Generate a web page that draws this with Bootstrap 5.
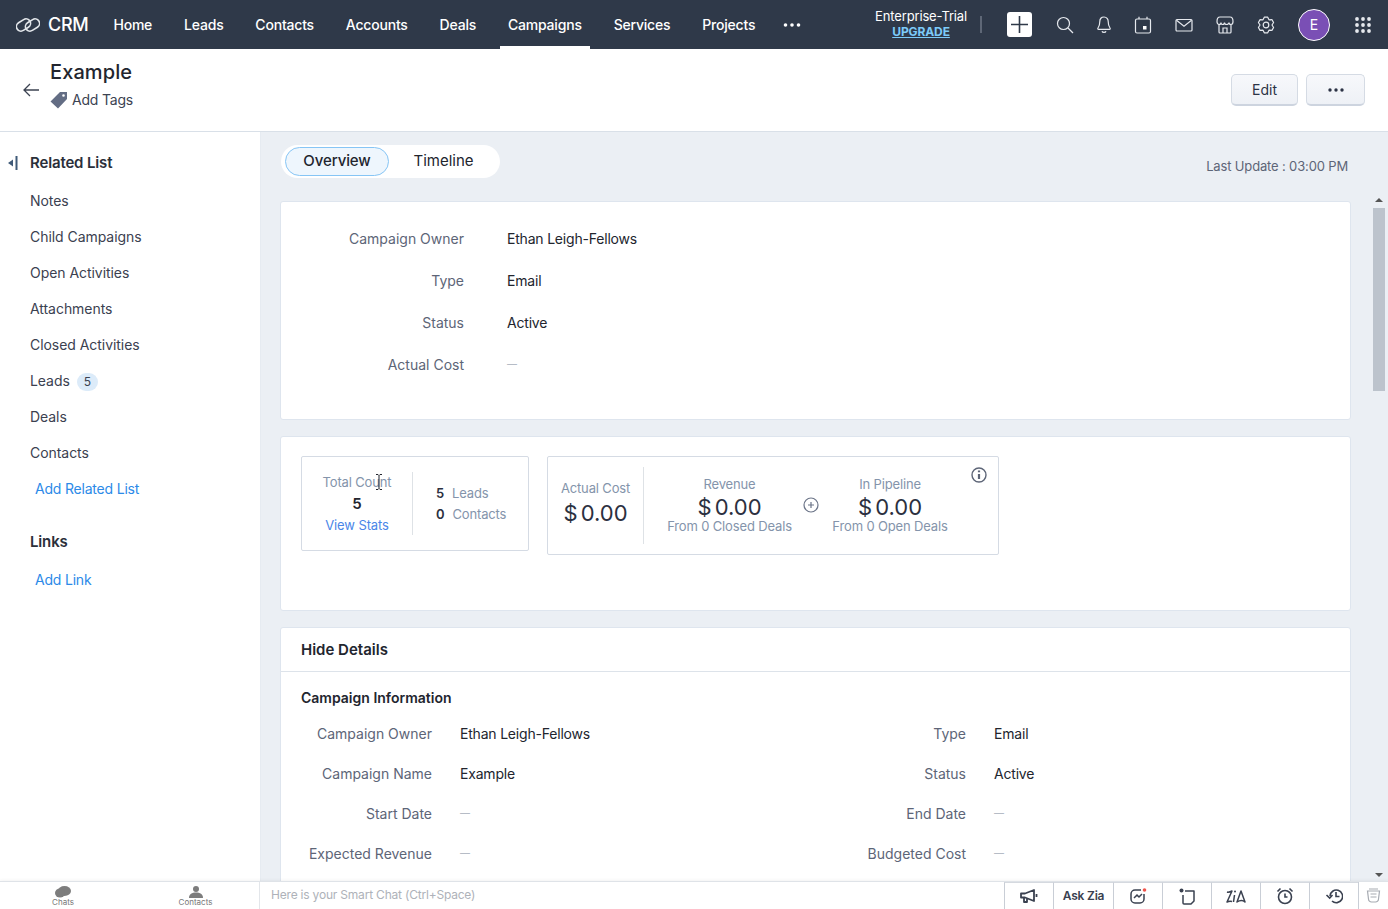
<!DOCTYPE html>
<html>
<head>
  <title>Campaign - Example</title>
  <link rel="stylesheet" href="https://cdn.jsdelivr.net/npm/bootstrap@5.3.0/dist/css/bootstrap.min.css">
  <style>
    html, body { height: 100%; }
    body { font-family: "Inter", "Liberation Sans", sans-serif; font-size: 14px; color: #22252e; overflow: hidden; background: #ebeff4; }
    .page-wrap { height: 909px; }

    /* top bar */
    .crm-top { height: 49px; background: #2f3949; color: #fff; padding: 0 17px 0 16px; flex: none; }
    .crm-brand { font-size: 18px; font-weight: 500; color: #fff; margin-right: 17px; gap: 8px; letter-spacing: -.3px; }
    .crm-link { color: #fff; text-decoration: none; height: 49px; padding: 0 8px; margin-right: 15.900px; line-height: 50px; font-weight: 500; font-size: 14px; letter-spacing: -.2px; border-bottom: 3px solid transparent; }
    .crm-link.active { border-bottom-color: #fff; }
    .trial-box { text-align: center; font-size: 13px; line-height: 15px; margin-right: 13px; margin-top: -1px; letter-spacing: -.15px; }
    .trial-box a { display: block; color: #7ccbf9; font-size: 12px; font-weight: 700; letter-spacing: -.1px; }
    .top-sep { width: 2px; height: 17px; background: #5e6776; margin-right: 25px; }
    .plus-btn { width: 25px; height: 25px; background: #fff; border-radius: 3px; margin-right: 24px; }
    .top-ico { width: 18px; height: 18px; margin-right: 23px; flex: none; }
    .top-ico.tight { margin-right: 21px; }
    .avatar-e { width: 32px; height: 32px; border-radius: 50%; background: #7a4fb5; border: 1px solid #fff; font-size: 14px; margin-right: 25px; }

    /* record header */
    .rec-head { height: 83px; background: #fff; border-bottom: 1px solid #d9e0e8; flex: none; padding-left: 23px; padding-right: 23px; }
    .rec-block { align-self: flex-start; padding-top: 11px; margin-left: 2px; }
    .rec-title { font-size: 20px; font-weight: 500; line-height: 24px; letter-spacing: .1px; }
    .rec-tags { font-size: 14px; color: #3c4352; line-height: 20px; margin-top: 6px; gap: 4px; letter-spacing: -.2px; }
    .head-btn { height: 32px; background: linear-gradient(#f7f8fb, #eef1f6); border: 1px solid #d5dbe4; border-bottom: 2px solid #cdd4df; border-radius: 5px; color: #2c3345; font-size: 14px; padding: 0; }
    .btn-edit { width: 67px; }
    .btn-more { width: 59px; }

    /* body columns */
    .body-row { flex: 1 1 auto; min-height: 0; }
    .side-col { width: 261px; background: #fff; border-right: 1px solid #e6ebf1; flex: none; padding-top: 21px; }
    .side-head { font-weight: 600; font-size: 15px; line-height: 20px; padding-left: 30px; color: #2b2f3a; position: relative; letter-spacing: -.15px; }
    .side-toggle { position: absolute; left: 8px; top: 3px; }
    .side-item { line-height: 20px; padding-left: 30px; margin-top: 16px; color: #3b4150; letter-spacing: -.05px; }
    .side-item.first-item { margin-top: 18px; }
    .side-add { padding-left: 35px; margin-top: 16px; line-height: 20px; letter-spacing: -.2px; }
    .side-add.link-add { margin-top: 18px; }
    .side-head.links-head { margin-top: 33px; }
    .side-add a, .blue-link { color: #2c8ae8; text-decoration: none; }
    .count-pill { background: #dcebf9; border-radius: 9px; font-size: 12px; padding: 0 7px; margin-left: 3px; display: inline-block; line-height: 18px; }
    .main-col { flex: 1 1 auto; min-width: 0; padding: 13px 0 0 20px; position: relative; overflow: hidden; }
    .tab-wrap { background: #fff; border-radius: 17px; height: 33px; width: 219px; padding: 1px 2px; }
    .tab-on { width: 104px; height: 29px; border: 1px solid #86c5f5; border-radius: 15px; background: #eef6fd; font-weight: 500; font-size: 15px; letter-spacing: -.1px; line-height: 26px; text-align: center; margin-left: 2px; margin-top: 1px; flex: none; }
    .tab-off { flex: 1; text-align: center; font-size: 15px; line-height: 29px; margin-top: 0; }
    .last-upd { color: #5d6577; font-size: 13px; margin-right: 40px; margin-top: 12px; letter-spacing: -.15px; }

    .white-card { background: #fff; border: 1px solid #dee5ee; border-radius: 3px; width: 1071px; margin-bottom: 16px; margin-left: -1px; }
    .overview-card { height: 219px; margin-top: 23px; padding-top: 15px; }
    .ov-row { display: grid; grid-template-columns: 183px 1fr; column-gap: 43px; height: 42px; align-items: center; }
    .f-label { color: #5d6577; text-align: right; }
    .f-val, .ov-val { letter-spacing: -.2px; }
    .f-dash { color: #a6adb9; font-size: 10px; }
    .stats-card { height: 175px; padding: 19px 20px; gap: 18px; display: flex; align-items: flex-start; }
    .stat-box { border: 1px solid #d5dbe4; border-radius: 2px; }
    .box-a { width: 228px; height: 95px; padding: 15px 0; position: relative; }
    .box-b { width: 452px; height: 99px; padding: 10px 0; position: relative; }
    .grey-lbl { color: #8494ab; font-size: 13px; line-height: 18px; letter-spacing: -.15px; }
    .num-b { font-weight: 600; font-size: 15px; line-height: 24px; margin-top: 1px; }
    .num-s { font-weight: 600; font-size: 13px; color: #2b3040; margin-right: 8px; }
    .count-col { width: 111px; padding-top: 1px; }
    .count-side { padding: 12px 0 0 23px; }
    .count-side .grey-lbl + .grey-lbl { margin-top: 3px; }
    .view-stats { font-size: 13px; line-height: 18px; color: #4a86e8; letter-spacing: -.1px; }
    .text-cursor { position: absolute; left: 73px; top: 17px; }
    .money { font-size: 22px; line-height: 20px; color: #2b3040; word-spacing: -3px; margin-top: 4px; }
    .cost-col { width: 96px; padding-top: 12px; }
    .cost-col .money { margin-top: 6px; }
    .rev-col { width: 171px; padding-top: 8px; }
    .pipe-col { width: 142px; padding-top: 8px; }
    .plus-ring { margin: 30px 0 0 -12px; flex: none; }
    .info-ring { position: absolute; right: 11px; top: 10px; }
    .detail-card { padding: 0 0 30px; }
    .detail-head { height: 44px; border-bottom: 1px solid #dde3ea; padding: 0 20px; font-weight: 600; font-size: 15px; line-height: 43px; }
    .detail-sub { font-weight: 600; font-size: 14px; padding: 16px 20px 5px; line-height: 20px; }
    .det-row { display: grid; grid-template-columns: 151px 349px 185px 1fr; height: 40px; align-items: center; }
    .det-row > .f-val { padding-left: 28px; }

    .fake-scroll { position: absolute; top: 62px; right: 3px; bottom: 0; width: 12px; background: #ebeff4; }
    .fake-scroll i { display: block; width: 12px; height: 183px; margin-top: 14px; background: #bcc3cc; }
    .scroll-up, .scroll-down { position: absolute; left: 2px; width: 0; height: 0; border-left: 4px solid transparent; border-right: 4px solid transparent; }
    .scroll-up { top: 4px; border-bottom: 4px solid #555; }
    .scroll-down { bottom: 4px; border-top: 4px solid #555; }

    /* bottom strip */
    .chat-bar { height: 28px; flex: none; background: #fff; border-top: 1px solid #dfe3e8; position: relative; box-shadow: 0 -1px 3px rgba(0,0,0,.05); }
    .chat-left { width: 260px; border-right: 1px solid #e3e6ea; color: #777; font-size: 8px; text-align: center; flex: none; }
    .chat-left > div { line-height: 8px; padding-top: 4px; flex: none; }
    .chat-cell-a { width: 126px; }
    .chat-cell-b { width: 133px; padding-left: 6px; }
    .chat-hint { color: #aeb2b9; font-size: 12px; letter-spacing: -.2px; padding-left: 11px; line-height: 26px; }
    .tool-cell { height: 27px; border-left: 1px solid #c9ced6; border-top: 1px solid #d5d9df; width: 49px; display: flex; align-items: center; justify-content: center; flex: none; font-size: 12px; font-weight: 600; color: #3a4150; letter-spacing: -.2px; }
    .tool-cell.wide { width: 60px; }
    .tool-cell.narrow { width: 30px; border-top: 0; }
  </style>
</head>
<body>
<div class="page-wrap d-flex flex-column">

  <nav class="crm-top d-flex align-items-center">
    <div class="crm-brand d-flex align-items-center">
      <svg width="24" height="18" viewBox="0 0 24 18" fill="none" stroke="#e3e6ea" stroke-width="1.600"><rect x="0" y="4.500" width="15" height="9" rx="4.500" transform="rotate(-32 7.500 9)"/><rect x="9" y="4.500" width="15" height="9" rx="4.500" transform="rotate(-32 16.500 9)"/></svg>
      <span>CRM</span>
    </div>
    <a class="crm-link" href="#">Home</a>
    <a class="crm-link" href="#">Leads</a>
    <a class="crm-link" href="#">Contacts</a>
    <a class="crm-link" href="#">Accounts</a>
    <a class="crm-link" href="#">Deals</a>
    <a class="crm-link active" href="#">Campaigns</a>
    <a class="crm-link" href="#">Services</a>
    <a class="crm-link" href="#">Projects</a>
    <svg width="18" height="4" viewBox="0 0 18 4" fill="#fff" class="ms-1"><circle cx="2.500" cy="2" r="1.800"/><circle cx="9" cy="2" r="1.800"/><circle cx="15.500" cy="2" r="1.800"/></svg>

    <div class="ms-auto d-flex align-items-center">
      <div class="trial-box">Enterprise-Trial<a href="#">UPGRADE</a></div>
      <div class="top-sep"></div>
      <div class="plus-btn d-flex align-items-center justify-content-center">
        <svg width="17" height="17" viewBox="0 0 17 17" stroke="#2f3949" stroke-width="1.600"><path d="M8.500 0v17M0 8.500h17"/></svg>
      </div>
      <svg class="top-ico tight" viewBox="0 0 18 18" fill="none" stroke="#e6e9ee" stroke-width="1.200"><circle cx="7.500" cy="7.500" r="6"/><path d="m12 12 5 5"/></svg>
      <svg class="top-ico tight" viewBox="0 0 18 18" fill="none" stroke="#e6e9ee" stroke-width="1.200"><path d="M9 1C6.300 1 4.800 3 4.800 5.500c0 3.500-.6 5-1.800 6.500-.5.700-.2 1.300.6 1.300h10.800c.8 0 1.100-.6.600-1.300C13.800 10.500 13.200 9 13.200 5.500 13.200 3 11.700 1 9 1Z"/><path d="M7 15.300c.5 1.500 3.500 1.500 4 0"/></svg>
      <svg class="top-ico" viewBox="0 0 18 18" fill="none" stroke="#e6e9ee" stroke-width="1.200"><rect x="1.500" y="3" width="15" height="14" rx="1.500"/><path d="M5 .8V3M13 .8V3"/><rect x="9" y="10" width="3.500" height="3.500" fill="#fff" stroke="none"/></svg>
      <svg class="top-ico" viewBox="0 0 18 18" fill="none" stroke="#e6e9ee" stroke-width="1.200"><rect x="1" y="3.500" width="16" height="11.500" rx="1"/><path d="m1.500 4.200 7.500 6 7.500-6"/></svg>
      <svg class="top-ico" viewBox="0 0 18 18" fill="none" stroke="#e6e9ee" stroke-width="1.200"><path d="M4 1h10c1.600 0 3 1.800 3 4.500 0 2-1 3-2 3-1.200 0-2-.8-2-2 0 1.200-1.500 2-2.500 2S8.500 7.700 8.500 6.500c0 1.200-1 2-2 2s-1.500-.8-1.500-2c0 1.200-1 2-2 2S1 7.500 1 5.500C1 2.800 2.400 1 4 1Z"/><path d="M3 8.500V16c0 .8.400 1 1 1h10c.6 0 1-.2 1-1V8.500"/><path d="M7 17v-5h4v5"/></svg>
      <svg class="top-ico" viewBox="0 0 18 18" fill="none" stroke="#e6e9ee" stroke-width="1.200" stroke-linejoin="round"><circle cx="9" cy="9" r="2.800"/><path d="M7.300 1.200h3.400L12 3.800l2.900-.15 1.700 2.880L15 9l1.600 2.470-1.700 2.880-2.900-.15-1.300 2.600H7.300L6 14.200l-2.900.15-1.700-2.880L3 9 1.400 6.530l1.700-2.880L6 3.800Z"/></svg>
      <div class="avatar-e d-flex align-items-center justify-content-center">E</div>
      <svg width="16" height="16" viewBox="0 0 16 16" fill="#e6e9ee"><circle cx="2" cy="2" r="1.900"/><circle cx="8" cy="2" r="1.900"/><circle cx="14" cy="2" r="1.900"/><circle cx="2" cy="8" r="1.900"/><circle cx="8" cy="8" r="1.900"/><circle cx="14" cy="8" r="1.900"/><circle cx="2" cy="14" r="1.900"/><circle cx="8" cy="14" r="1.900"/><circle cx="14" cy="14" r="1.900"/></svg>
    </div>
  </nav>

  <header class="rec-head d-flex align-items-center">
    <svg width="17" height="14" viewBox="0 0 17 14" fill="none" stroke="#3c4352" stroke-width="1.300" class="me-2 flex-none"><path d="M16 7H1M7 1 1 7l6 6"/></svg>
    <div class="rec-block">
      <div class="rec-title">Example</div>
      <div class="rec-tags d-flex align-items-center">
        <svg width="18" height="18" viewBox="0 0 18 18" fill="#636d84"><path d="M10 1h7v7l-9 9.500L.5 10.500Zm3.500 2.200a1.300 1.300 0 1 0 0 2.600 1.300 1.300 0 0 0 0-2.600Z"/></svg>
        <span>Add Tags</span>
      </div>
    </div>
    <div class="ms-auto d-flex gap-2">
      <button class="head-btn btn-edit" type="button">Edit</button>
      <button class="head-btn btn-more d-flex align-items-center justify-content-center" type="button">
        <svg width="16" height="4" viewBox="0 0 16 4" fill="#2c3345"><circle cx="2" cy="2" r="1.700"/><circle cx="8" cy="2" r="1.700"/><circle cx="14" cy="2" r="1.700"/></svg>
      </button>
    </div>
  </header>

  <div class="body-row d-flex">
    <aside class="side-col">
      <div class="side-head">
        <svg class="side-toggle" width="10" height="14" viewBox="0 0 10 14"><path d="M5 3.500v7L0 7Z" fill="#3f5a78"/><rect x="7.500" y="0" width="2" height="14" fill="#3f5a78"/></svg>
        Related List
      </div>
      <div class="side-item first-item">Notes</div>
      <div class="side-item">Child Campaigns</div>
      <div class="side-item">Open Activities</div>
      <div class="side-item">Attachments</div>
      <div class="side-item">Closed Activities</div>
      <div class="side-item">Leads <span class="count-pill">5</span></div>
      <div class="side-item">Deals</div>
      <div class="side-item">Contacts</div>
      <div class="side-add"><a href="#">Add Related List</a></div>
      <div class="side-head links-head">Links</div>
      <div class="side-add link-add"><a href="#">Add Link</a></div>
    </aside>

    <main class="main-col">
      <div class="d-flex justify-content-between align-items-start">
        <div class="tab-wrap d-flex">
          <div class="tab-on">Overview</div>
          <div class="tab-off">Timeline</div>
        </div>
        <div class="last-upd">Last Update : 03:00 PM</div>
      </div>

      <section class="white-card overview-card">
        <div class="ov-row"><div class="f-label">Campaign Owner</div><div class="ov-val">Ethan Leigh-Fellows</div></div>
        <div class="ov-row"><div class="f-label">Type</div><div class="ov-val">Email</div></div>
        <div class="ov-row"><div class="f-label">Status</div><div class="ov-val">Active</div></div>
        <div class="ov-row"><div class="f-label">Actual Cost</div><div class="f-dash">—</div></div>
      </section>

      <section class="white-card stats-card">
        <div class="stat-box box-a d-flex">
          <div class="count-col text-center border-end">
            <div class="grey-lbl">Total Count</div>
            <div class="num-b">5</div>
            <div class="view-stats">View Stats</div>
          </div>
          <div class="count-side">
            <div class="grey-lbl"><span class="num-s">5</span>Leads</div>
            <div class="grey-lbl"><span class="num-s">0</span>Contacts</div>
          </div>
          <svg class="text-cursor" width="8" height="16" viewBox="0 0 8 16" fill="none" stroke="#22252e" stroke-width="1"><path d="M1 .5h2l1 1 1-1h2M1 15.500h2l1-1 1 1h2M4 1.500v13"/></svg>
        </div>
        <div class="stat-box box-b d-flex">
          <div class="cost-col text-center border-end">
            <div class="grey-lbl">Actual Cost</div>
            <div class="money">$ 0.00</div>
          </div>
          <div class="rev-col text-center">
            <div class="grey-lbl">Revenue</div>
            <div class="money">$ 0.00</div>
            <div class="grey-lbl">From 0 Closed Deals</div>
          </div>
          <svg class="plus-ring" width="16" height="16" viewBox="0 0 16 16" fill="none" stroke="#6b7488" stroke-width="1.200"><circle cx="8" cy="8" r="7"/><path d="M8 5v6M5 8h6"/></svg>
          <div class="pipe-col text-center">
            <div class="grey-lbl">In Pipeline</div>
            <div class="money">$ 0.00</div>
            <div class="grey-lbl">From 0 Open Deals</div>
          </div>
          <svg class="info-ring" width="16" height="16" viewBox="0 0 16 16" fill="none" stroke="#5d6577" stroke-width="1.400"><circle cx="8" cy="8" r="7"/><path d="M8 7v5M8 3.500v1.800" stroke-width="2.200"/></svg>
        </div>
      </section>

      <section class="white-card detail-card">
        <div class="detail-head">Hide Details</div>
        <div class="detail-sub">Campaign Information</div>
        <div class="det-row"><div class="f-label">Campaign Owner</div><div class="f-val">Ethan Leigh-Fellows</div><div class="f-label">Type</div><div class="f-val">Email</div></div>
        <div class="det-row"><div class="f-label">Campaign Name</div><div class="f-val">Example</div><div class="f-label">Status</div><div class="f-val">Active</div></div>
        <div class="det-row"><div class="f-label">Start Date</div><div class="f-val f-dash">—</div><div class="f-label">End Date</div><div class="f-val f-dash">—</div></div>
        <div class="det-row"><div class="f-label">Expected Revenue</div><div class="f-val f-dash">—</div><div class="f-label">Budgeted Cost</div><div class="f-val f-dash">—</div></div>
      </section>

      <div class="fake-scroll"><span class="scroll-up"></span><i></i><span class="scroll-down"></span></div>
    </main>
  </div>

  <footer class="chat-bar d-flex">
    <div class="chat-left d-flex">
      <div class="chat-cell-a">
        <svg width="16" height="12" viewBox="0 0 16 12" fill="#7d7d7d" class="d-block mx-auto"><ellipse cx="9.500" cy="5" rx="6.500" ry="5"/><ellipse cx="5" cy="7" rx="5" ry="4.500"/></svg>
        Chats
      </div>
      <div class="chat-cell-b">
        <svg width="16" height="12" viewBox="0 0 16 12" fill="#7d7d7d" class="d-block mx-auto"><circle cx="8" cy="3" r="3"/><path d="M1 12c0-4 3-5.500 7-5.500s7 1.500 7 5.500Z"/></svg>
        Contacts
      </div>
    </div>
    <div class="chat-hint flex-grow-1">Here is your Smart Chat (Ctrl+Space)</div>
    <div class="tool-cell">
      <svg width="18" height="15" viewBox="0 0 18 15" fill="none" stroke="#3a4150" stroke-width="1.800" stroke-linejoin="round"><path d="M1 4.500h4L14 1v11L5 8.500H1Z"/><path d="M4 8.500V13h3v-3.500"/><path d="M16.500 5v3"/></svg>
    </div>
    <div class="tool-cell wide">Ask Zia</div>
    <div class="tool-cell">
      <svg width="17" height="16" viewBox="0 0 17 16" fill="none" stroke="#3a4150" stroke-width="1.500"><path d="M11 2H5a4 4 0 0 0-4 4v5a4 4 0 0 0 4 4h5a4 4 0 0 0 4-4V6"/><path d="m4 10 3-3 2 2 3-3"/><circle cx="14.500" cy="2" r="1.800" fill="#f0554c" stroke="none"/></svg>
    </div>
    <div class="tool-cell">
      <svg width="16" height="17" viewBox="0 0 16 17" fill="none" stroke="#3a4150" stroke-width="1.500" stroke-linejoin="round"><circle cx="2.500" cy="2.500" r="2" fill="#3a4150" stroke="none"/><path d="M6 3h9v10l-3 3H5a1 1 0 0 1-1-1V7"/></svg>
    </div>
    <div class="tool-cell">
      <svg width="20" height="15" viewBox="0 0 20 15" fill="none" stroke="#3a4150" stroke-width="1.500" stroke-linejoin="round"><path d="M1 3c1.500.5 3 0 5-1L1 13c2-1 3.500-1 5-.5"/><path d="m8.500 6-1 7"/><circle cx="9" cy="2.500" r="1" fill="#3a4150" stroke="none"/><path d="m11 13 4-11 4 11c-2-2-5-2-8 0Z"/></svg>
    </div>
    <div class="tool-cell">
      <svg width="18" height="18" viewBox="0 0 18 18" fill="none" stroke="#3a4150" stroke-width="1.600"><circle cx="9" cy="10" r="6.500"/><path d="M9 6.500V10h2.500M1.500 4.500 4.500 1.500M16.500 4.500 13.500 1.500"/></svg>
    </div>
    <div class="tool-cell">
      <svg width="18" height="16" viewBox="0 0 18 16" fill="none" stroke="#3a4150" stroke-width="1.600"><path d="M5 8a6.300 6.300 0 1 1 2 5"/><path d="m1.500 7 3.200 3L7.500 7M11 4v4.500h3.500"/></svg>
    </div>
    <div class="tool-cell narrow">
      <svg width="15" height="15" viewBox="0 0 15 15" fill="none" stroke="#a7abb2" stroke-width="1.200"><path d="M1.500 3h12l-1 8a3 3 0 0 1-3 3h-4a3 3 0 0 1-3-3Z"/><path d="M3 1h9M4.500 6h6M4.500 9h6"/></svg>
    </div>
  </footer>
</div>
</body>
</html>
